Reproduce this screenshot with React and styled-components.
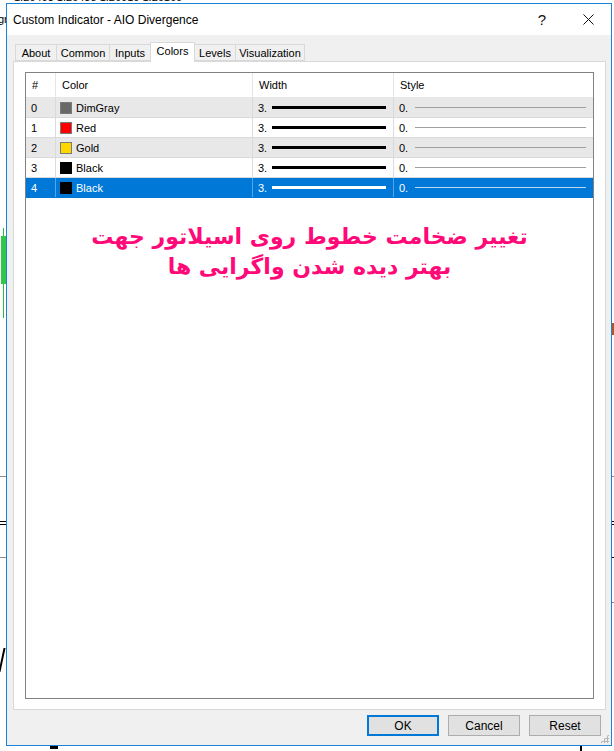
import styled, { createGlobalStyle } from "styled-components";

const UI_FONT = `"Liberation Sans", Arial, sans-serif`;

const GlobalStyle = createGlobalStyle`
  html, body {
    margin: 0;
    padding: 0;
    background: #fff;
  }
  body {
    font-family: "Liberation Sans", Arial, sans-serif;
  }
`;

const Stage = styled.div`
  position: relative;
  width: 614px;
  height: 751px;
  overflow: hidden;
  background: #fff;
  padding: 3px 0 0 6px;
  box-sizing: border-box;
`;

// bits of the chart that peek out around the dialog
const ChartMark = styled.div`
  position: absolute;
  left: ${(p) => p.x}px;
  top: ${(p) => p.y}px;
  width: ${(p) => p.w}px;
  height: ${(p) => p.h}px;
  background: ${(p) => p.color || "#000"};
  transform: ${(p) => (p.skew ? `skewX(${p.skew}deg)` : "none")};
`;
const ChartText = styled.div`
  position: absolute;
  left: ${(p) => p.x}px;
  top: ${(p) => p.y}px;
  font: 11px "Liberation Sans", Arial, sans-serif;
  color: #000;
  white-space: nowrap;
`;

const Window = styled.div`
  position: relative;
  z-index: 1;
  width: 606px;
  height: 743px;
  box-sizing: border-box;
  border: 1px solid #1883d7;
  background: #f0f0f0;
  display: flex;
  flex-direction: column;
`;

const TitleBar = styled.div`
  height: 31px;
  flex: none;
  background: #fff;
  display: flex;
  align-items: center;
  padding-left: 6px;
  font: 12px "Liberation Sans", Arial, sans-serif;
  color: #000;
`;
const Title = styled.div`
  flex: 1;
`;
const CaptionButton = styled.div`
  width: 46px;
  height: 31px;
  display: flex;
  align-items: center;
  justify-content: center;
  font: 15px "Liberation Sans", Arial, sans-serif;
  color: #111;
`;

const TabStrip = styled.div`
  display: flex;
  align-items: flex-end;
  height: 19px;
  margin: 7px 0 0 9px;
  flex: none;
`;
const Tab = styled.div`
  position: relative;
  width: ${(p) => p.w}px;
  height: ${(p) => (p.active ? 20 : 17)}px;
  margin-left: -1px;
  margin-bottom: ${(p) => (p.active ? -1 : 0)}px;
  z-index: ${(p) => (p.active ? 2 : 1)};
  box-sizing: border-box;
  border: 1px solid #d9d9d9;
  border-bottom: ${(p) => (p.active ? "none" : "1px solid #d9d9d9")};
  background: ${(p) => (p.active ? "#fff" : "#f0f0f0")};
  font: 11px ${UI_FONT};
  color: #000;
  display: flex;
  align-items: center;
  justify-content: center;
  padding-bottom: ${(p) => (p.active ? 3 : 0)}px;
`;

const Panel = styled.div`
  flex: 1;
  margin: 0 5px 0 6px;
  border: 1px solid #d9d9d9;
  background: #fff;
  padding: 10px 11px;
  display: flex;
  flex-direction: column;
`;

const ListView = styled.div`
  flex: 1;
  border: 1px solid #828282;
  background: #fff;
  display: flex;
  flex-direction: column;
`;

const HeaderRow = styled.div`
  display: flex;
  height: 24px;
  border-bottom: 1px solid #e5e5e5;
`;
const HeaderCell = styled.div`
  width: ${(p) => p.w}px;
  box-sizing: border-box;
  padding-left: 6px;
  border-right: 1px solid #e5e5e5;
  font: 11px ${UI_FONT};
  line-height: 24px;
  color: #000;
  &:last-child {
    border-right: none;
  }
`;

const Row = styled.div`
  display: flex;
  height: 20px;
  box-sizing: border-box;
  border-bottom: 1px solid ${(p) => (p.selected ? "#0078d7" : "#dadada")};
  background: ${(p) =>
    p.selected ? "#0078d7" : p.striped ? "#e8e8e8" : "#fff"};
  color: ${(p) => (p.selected ? "#fff" : "#000")};
`;
const Cell = styled.div`
  width: ${(p) => p.w}px;
  box-sizing: border-box;
  padding-left: 5px;
  border-right: 1px solid ${(p) => (p.selected ? "#5ba3e6" : "#dadada")};
  display: flex;
  align-items: center;
  font: 11px ${UI_FONT};
  &:last-child {
    border-right: none;
  }
`;
const Swatch = styled.span`
  width: 12px;
  height: 12px;
  box-sizing: border-box;
  border: 1px solid ${(p) => (p.color === "#000000" ? "#000" : "#7a7a7a")};
  background: ${(p) => p.color};
  margin: 0 4px 0 -1px;
  flex: none;
`;
const ThickLine = styled.span`
  width: 114px;
  height: 3px;
  margin-left: 5px;
  background: ${(p) => (p.selected ? "#fff" : "#000")};
  flex: none;
`;
const ThinLine = styled.span`
  width: 171px;
  height: 1px;
  margin-left: 7px;
  background: ${(p) => (p.selected ? "#b9d8f3" : "#a0a0a0")};
  flex: none;
`;

const Note = styled.div`
  margin-top: 24px;
  direction: rtl;
  text-align: center;
  font: bold 22px "DejaVu Sans", sans-serif;
  line-height: 30px;
  color: #ff0878;
`;

const Footer = styled.div`
  height: 35px;
  flex: none;
  display: flex;
  justify-content: flex-end;
  gap: 9px;
  padding: 5px 10px 0 0;
  box-sizing: border-box;
`;
const Button = styled.div`
  width: 72px;
  height: 21px;
  box-sizing: border-box;
  border: ${(p) => (p.primary ? "2px solid #0078d7" : "1px solid #adadad")};
  background: #e1e1e1;
  font: 12px ${UI_FONT};
  color: #000;
  display: flex;
  align-items: center;
  justify-content: center;
`;
const SizeGrip = styled.div`
  position: absolute;
  right: 2px;
  bottom: 2px;
  width: 9px;
  height: 9px;
  background: radial-gradient(circle, #b5b5b5 1px, transparent 1.2px) 0 0 / 3px 3px;
  clip-path: polygon(100% 0, 100% 100%, 0 100%);
`;

const tabs = [
  { name: "About", w: 42 },
  { name: "Common", w: 54 },
  { name: "Inputs", w: 42 },
  { name: "Colors", w: 45, active: true },
  { name: "Levels", w: 42 },
  { name: "Visualization", w: 70 },
];

const cols = [30, 197, 141, 198];

const rows = [
  { n: 0, name: "DimGray", color: "#696969" },
  { n: 1, name: "Red", color: "#ff0000" },
  { n: 2, name: "Gold", color: "#ffd700" },
  { n: 3, name: "Black", color: "#000000" },
  { n: 4, name: "Black", color: "#000000", selected: true },
];

export default function App() {
  return (
    <>
      <GlobalStyle />
      <Stage>
        <ChartText x={14} y={-9}>1.26403 1.26438 1.26010 1.26160</ChartText>
        <ChartText x={-2} y={13}>gr</ChartText>
        <ChartMark x={3} y={228} w={1} h={90} color="#22c23a" />
        <ChartMark x={1} y={236} w={5} h={48} color="#2fc64a" />
        <ChartMark x={0} y={476} w={6} h={1} color="#8a8a8a" />
        <ChartMark x={0} y={521} w={6} h={1} />
        <ChartMark x={0} y={524} w={6} h={1} />
        <ChartMark x={0} y={557} w={6} h={1} color="#8a8a8a" />
        <ChartMark x={1} y={648} w={2} h={24} skew={-12} />
        <ChartMark x={611} y={323} w={3} h={12} color="#b0562c" />
        <ChartMark x={611} y={476} w={3} h={1} color="#8a8a8a" />
        <ChartMark x={611} y={521} w={3} h={1} />
        <ChartMark x={611} y={524} w={3} h={1} />
        <ChartMark x={611} y={557} w={3} h={1} />
        <ChartMark x={611} y={602} w={3} h={1} color="#8a8a8a" />
        <ChartMark x={50} y={746} w={8} h={3} />
        <ChartMark x={580} y={746} w={2} h={5} />
        <Window>
          <TitleBar>
            <Title>Custom Indicator - AIO Divergence</Title>
            <CaptionButton>?</CaptionButton>
            <CaptionButton>
              <svg width="11" height="11" viewBox="0 0 11 11">
                <path d="M0.5 0.5 L10.5 10.5 M10.5 0.5 L0.5 10.5" stroke="#111" strokeWidth="1" />
              </svg>
            </CaptionButton>
          </TitleBar>
          <TabStrip>
            {tabs.map((t) => (
              <Tab key={t.name} w={t.w} active={t.active}>
                {t.name}
              </Tab>
            ))}
          </TabStrip>
          <Panel>
            <ListView>
              <HeaderRow>
                <HeaderCell w={cols[0]}>#</HeaderCell>
                <HeaderCell w={cols[1]}>Color</HeaderCell>
                <HeaderCell w={cols[2]}>Width</HeaderCell>
                <HeaderCell w={cols[3]}>Style</HeaderCell>
              </HeaderRow>
              {rows.map((r) => (
                <Row key={r.n} striped={r.n % 2 === 0} selected={r.selected}>
                  <Cell w={cols[0]} selected={r.selected}>{r.n}</Cell>
                  <Cell w={cols[1]} selected={r.selected}>
                    <Swatch color={r.color} />
                    {r.name}
                  </Cell>
                  <Cell w={cols[2]} selected={r.selected}>
                    3.
                    <ThickLine selected={r.selected} />
                  </Cell>
                  <Cell w={cols[3]} selected={r.selected}>
                    0.
                    <ThinLine selected={r.selected} />
                  </Cell>
                </Row>
              ))}
              <Note>
                تغییر ضخامت خطوط روی اسیلاتور جهت
                <br />
                بهتر دیده شدن واگرایی ها
              </Note>
            </ListView>
          </Panel>
          <Footer>
            <Button primary>OK</Button>
            <Button>Cancel</Button>
            <Button>Reset</Button>
          </Footer>
          <SizeGrip />
        </Window>
      </Stage>
    </>
  );
}
